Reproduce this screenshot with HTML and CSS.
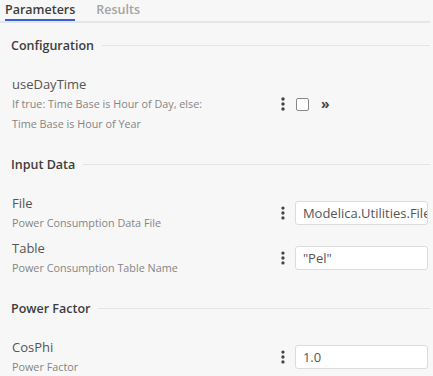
FILE: index.html
```html
<!DOCTYPE html>
<html lang="en">
<head>
    <meta charset="UTF-8">
    <link rel="stylesheet" href="styles.css">
</head>
<body>
    <div class="tabs">
        <span class="tab active">Parameters</span>
        <span class="tab">Results</span>
    </div>
    <div class="content">
        <div class="section">
            <div class="section-head"><span>Configuration</span><i class="rule"></i></div>
            <div class="param">
                <div class="info">
                    <div class="name">useDayTime</div>
                    <div class="desc">If true: Time Base is Hour of Day, else:<br>Time Base is Hour of Year</div>
                </div>
                <div class="controls">
                    <svg class="kebab" width="4" height="14" viewBox="0 0 4 14"><circle cx="2" cy="2" r="1.7"/><circle cx="2" cy="7" r="1.7"/><circle cx="2" cy="12" r="1.7"/></svg>
                    <span class="check"></span>
                    <span class="more">&raquo;</span>
                </div>
            </div>
        </div>
        <div class="section">
            <div class="section-head"><span>Input Data</span><i class="rule"></i></div>
            <div class="param">
                <div class="info">
                    <div class="name">File</div>
                    <div class="desc">Power Consumption Data File</div>
                </div>
                <div class="controls">
                    <svg class="kebab" width="4" height="14" viewBox="0 0 4 14"><circle cx="2" cy="2" r="1.7"/><circle cx="2" cy="7" r="1.7"/><circle cx="2" cy="12" r="1.7"/></svg>
                    <div class="field">Modelica.Utilities.File</div>
                </div>
            </div>
            <div class="param">
                <div class="info">
                    <div class="name">Table</div>
                    <div class="desc">Power Consumption Table Name</div>
                </div>
                <div class="controls">
                    <svg class="kebab" width="4" height="14" viewBox="0 0 4 14"><circle cx="2" cy="2" r="1.7"/><circle cx="2" cy="7" r="1.7"/><circle cx="2" cy="12" r="1.7"/></svg>
                    <div class="field">"Pel"</div>
                </div>
            </div>
        </div>
        <div class="section">
            <div class="section-head"><span>Power Factor</span><i class="rule"></i></div>
            <div class="param">
                <div class="info">
                    <div class="name">CosPhi</div>
                    <div class="desc">Power Factor</div>
                </div>
                <div class="controls">
                    <svg class="kebab" width="4" height="14" viewBox="0 0 4 14"><circle cx="2" cy="2" r="1.7"/><circle cx="2" cy="7" r="1.7"/><circle cx="2" cy="12" r="1.7"/></svg>
                    <div class="field">1.0</div>
                </div>
            </div>
        </div>
    </div>
</body>
</html>
```

FILE: styles.css
```css
body{margin: 0;background: #f7f7f7;font-family: "Open Sans", "Noto Sans", sans-serif;color: #444;overflow: hidden}
.tabs{display: flex;height: 21px;margin-right: 3px;padding-left: 5px;border-bottom: 2px solid #e6e6e6}
.tab{font-size: 12.5px;font-weight: 600;line-height: 19px;margin-right: 21px;color: #a3a3a3}
.tab.active{color: #3d3d3d;border-bottom: 2px solid #3a5fd0;height: 19px}
.content{margin-right: 3px}
.section-head{display: flex;align-items: center;height: 20px;margin: 20px 0 19px;padding-left: 11px;font-size: 12.5px;font-weight: 600;color: #3d3d3d}
.section:first-child .section-head{margin-top: 12px}
.rule{flex: 1;height: 1px;background: #e4e4e4;margin-left: 8px}
.param{display: flex;align-items: center;padding-left: 12px;padding-right: 2px;margin-bottom: 5px}
.info{flex: 1}
.name{font-size: 13px;line-height: 20px;color: #555}
.desc{font-size: 10.8px;line-height: 20px;color: #858585}
.controls{display: flex;align-items: center;width: 150px}
.kebab{fill: #444;margin-left: 3px;margin-right: 10px}
.check{width: 11px;height: 11px;border: 1px solid #888;border-radius: 2px;background: #fff;margin-left: 1px}
.more{font-size: 14px;font-weight: 700;margin-left: 12px;line-height: 14px;color: #444}
.field{width: 127px;height: 22px;line-height: 22px;padding-left: 7px;border: 1px solid #dcdcdc;border-radius: 3px;background: #fff;font-size: 13px;color: #555;white-space: nowrap;overflow: hidden}
```
